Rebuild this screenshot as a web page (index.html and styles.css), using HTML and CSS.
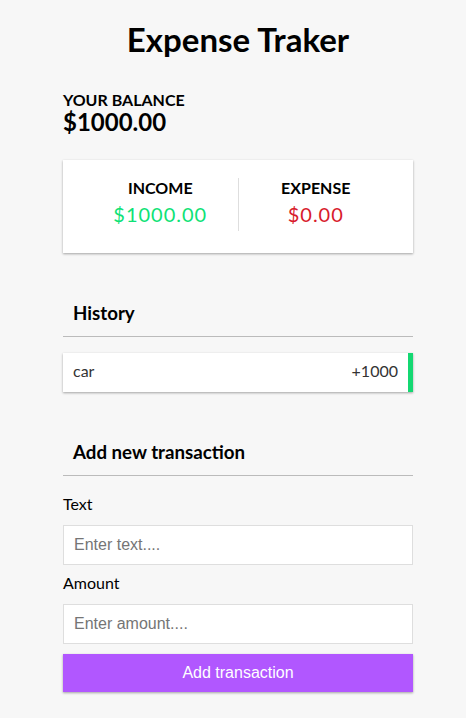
FILE: index.html
```html
<!DOCTYPE html>
<html lang="en">
<head>
<meta charset="utf-8">
<title>Expense Traker</title>
<link rel="stylesheet" href="styles.css">
</head>
<body>
  <div class="container">
    <h1 class="title">Expense Traker</h1>
    <h4 class="label-caps balance-label">Your Balance</h4>
    <h2 class="balance">$1000.00</h2>
    <div class="inc-exp">
      <div class="inc-exp-col first">
        <h4 class="label-caps">Income</h4>
        <p class="money plus">$1000.00</p>
      </div>
      <div class="inc-exp-col">
        <h4 class="label-caps">Expense</h4>
        <p class="money minus">$0.00</p>
      </div>
    </div>
    <h3 class="section-title history-title">History</h3>
    <ul class="list">
      <li class="list-item plus"><span>car</span><span>+1000</span></li>
    </ul>
    <h3 class="section-title add-title">Add new transaction</h3>
    <form class="form">
      <div class="form-control">
        <label class="field-label" for="text">Text</label>
        <input class="field-input" type="text" id="text" placeholder="Enter text....">
      </div>
      <div class="form-control">
        <label class="field-label" for="amount">Amount</label>
        <input class="field-input" type="number" id="amount" placeholder="Enter amount....">
      </div>
      <button class="btn" type="button">Add transaction</button>
    </form>
  </div>
</body>
</html>
```

FILE: styles.css
```css
* { box-sizing: border-box; }

body {
  margin: 0;
  padding: 20px 0 0 10px;
  background-color: #f7f7f7;
  font-family: Lato, "Noto Sans", sans-serif;
  color: #000;
}

.container {
  width: 350px;
  margin: 0 auto;
}

.title {
  margin: 0;
  font-size: 33px;
  line-height: 38px;
  text-align: center;
  font-weight: 700;
}

.label-caps {
  margin: 0;
  font-size: 16px;
  font-weight: 700;
  text-transform: uppercase;
}

.balance-label {
  margin-top: 33px;
  line-height: 17px;
}

.balance {
  margin: 0;
  font-size: 24px;
  line-height: 28px;
  font-weight: 700;
}

.inc-exp {
  display: flex;
  margin-top: 24px;
  padding: 18px 20px 22px;
  background-color: #fff;
  box-shadow: 0 1px 3px rgba(0,0,0,0.12), 0 1px 2px rgba(0,0,0,0.24);
}

.inc-exp-col {
  flex: 1;
  text-align: center;
}

.inc-exp-col.first { border-right: 1px solid #dedede; }

.money {
  margin: 5px 0;
  font-size: 20px;
  line-height: 24px;
  letter-spacing: 1px;
}

.money.plus { color: #0ee276; }
.money.minus { color: #d81b2c; }

.section-title {
  margin: 0;
  padding: 0 10px 12px;
  font-size: 18.72px;
  font-weight: 700;
  border-bottom: 1px solid #bbb;
}

.history-title { margin-top: 49px; }
.add-title { margin-top: 49px; }

.list {
  list-style: none;
  margin: 16px 0 0;
  padding: 0;
}

.list-item {
  display: flex;
  justify-content: space-between;
  padding: 8px 10px 12px;
  background-color: #fff;
  color: #333;
  font-size: 16px;
  box-shadow: 0 1px 3px rgba(0,0,0,0.12), 0 1px 2px rgba(0,0,0,0.24);
}

.list-item.plus { border-right: 5px solid #14d872; }

.form { margin-top: 10px; }

.field-label {
  display: inline-block;
  margin: 8px 0 12px;
  font-size: 16px;
}

.field-input {
  display: block;
  width: 100%;
  height: 40px;
  padding: 0 10px;
  border: 1px solid #dedede;
  border-radius: 0;
  font-family: "Liberation Sans", Arial, sans-serif;
  font-size: 16px;
  background: #fff;
}

.btn {
  display: block;
  width: 100%;
  margin: 10px 0 30px;
  padding: 10px;
  border: 0;
  background-color: #b157ff;
  color: #fff;
  font-family: "Liberation Sans", Arial, sans-serif;
  font-size: 16px;
  line-height: 18px;
  box-shadow: 0 1px 3px rgba(0,0,0,0.12), 0 1px 2px rgba(0,0,0,0.24);
}
```
